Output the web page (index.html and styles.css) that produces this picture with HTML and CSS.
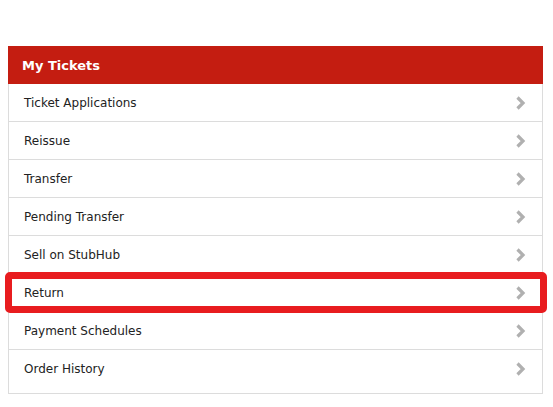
FILE: index.html
```html
<!DOCTYPE html>
<html>
<head>
<meta charset="utf-8">
<link rel="stylesheet" href="styles.css">
</head>
<body>
<div class="panel">
  <div class="panel-head">My Tickets</div>
  <ul class="menu">
    <li class="item"><span>Ticket Applications</span><svg class="chev" viewBox="0 0 11 14"><path d="M2.5 1.5 L8 7 L2.5 12.5"/></svg></li>
    <li class="item"><span>Reissue</span><svg class="chev" viewBox="0 0 11 14"><path d="M2.5 1.5 L8 7 L2.5 12.5"/></svg></li>
    <li class="item"><span>Transfer</span><svg class="chev" viewBox="0 0 11 14"><path d="M2.5 1.5 L8 7 L2.5 12.5"/></svg></li>
    <li class="item"><span>Pending Transfer</span><svg class="chev" viewBox="0 0 11 14"><path d="M2.5 1.5 L8 7 L2.5 12.5"/></svg></li>
    <li class="item"><span>Sell on StubHub</span><svg class="chev" viewBox="0 0 11 14"><path d="M2.5 1.5 L8 7 L2.5 12.5"/></svg></li>
    <li class="item highlighted"><span>Return</span><svg class="chev" viewBox="0 0 11 14"><path d="M2.5 1.5 L8 7 L2.5 12.5"/></svg></li>
    <li class="item"><span>Payment Schedules</span><svg class="chev" viewBox="0 0 11 14"><path d="M2.5 1.5 L8 7 L2.5 12.5"/></svg></li>
    <li class="item last"><span>Order History</span><svg class="chev" viewBox="0 0 11 14"><path d="M2.5 1.5 L8 7 L2.5 12.5"/></svg></li>
  </ul>
</div>
</body>
</html>
```
FILE: styles.css
```css
html, body {
  margin: 0;
  padding: 0;
  background: #fff;
}
body {
  padding: 46px 10px 0 8px;
  font-family: "DejaVu Sans", Verdana, sans-serif;
  font-size: 12px;
  color: #222;
}
.panel {
  width: 533px;
  border: 1px solid #dcdcdc;
  border-top: none;
}
.panel-head {
  background: #c41d11;
  color: #fff;
  font-weight: bold;
  height: 38px;
  line-height: 39px;
  padding-left: 14px;
  margin: 0 -1px;
  font-size: 13px;
}
.menu {
  list-style: none;
  margin: 0;
  padding: 0;
}
.item {
  position: relative;
  display: flex;
  align-items: center;
  justify-content: space-between;
  padding: 1px 16px 0 15px;
  box-sizing: content-box;
  height: 36px;
  border-bottom: 1px solid #dcdcdc;
}
.item.last {
  border-bottom: none;
  padding-bottom: 6px;
}
.chev {
  width: 11px;
  height: 14px;
  fill: none;
  stroke: #b0b0b0;
  stroke-width: 3.2;
  stroke-linejoin: miter;
}
.highlighted::after {
  content: "";
  position: absolute;
  left: -4px;
  right: -5px;
  top: -2px;
  bottom: -2px;
  border: 7px solid #e81c1f;
  border-radius: 5px;
}
```
